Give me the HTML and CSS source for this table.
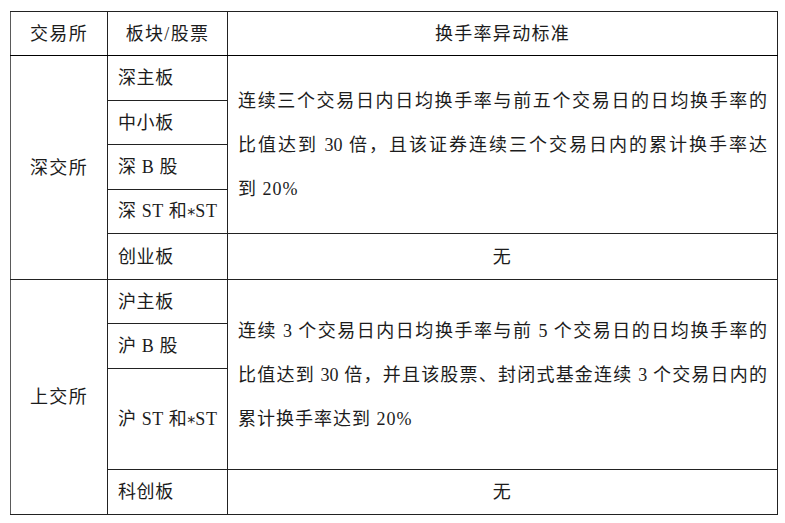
FILE: index.html
```html
<!DOCTYPE html>
<html lang="zh">
<head>
<meta charset="utf-8">
<title>换手率异动标准</title>
<link rel="stylesheet" href="styles.css">
</head>
<body>
<table class="grid">
  <colgroup>
    <col class="c1">
    <col class="c2">
    <col class="c3">
  </colgroup>
  <thead>
    <tr class="h-head">
      <th class="center">交易所</th>
      <th class="center">板块/股票</th>
      <th class="center">换手率异动标准</th>
    </tr>
  </thead>
  <tbody>
    <tr class="h45">
      <td class="center ex" rowspan="5">深交所</td>
      <td class="board">深主板</td>
      <td class="para" rowspan="4">
        <span class="jl">连续三个交易日内日均换手率与前五个交易日的日均换手率的</span>
        <span class="jl">比值达到 30 倍，且该证券连续三个交易日内的累计换手率达</span>
        <span class="ll">到 20%</span>
      </td>
    </tr>
    <tr class="h44"><td class="board">中小板</td></tr>
    <tr class="h45"><td class="board">深 B 股</td></tr>
    <tr class="h44"><td class="board">深 ST 和<span class="ast">*</span>ST</td></tr>
    <tr class="h46">
      <td class="board">创业板</td>
      <td class="center none">无</td>
    </tr>
    <tr class="h44">
      <td class="center ex" rowspan="4">上交所</td>
      <td class="board">沪主板</td>
      <td class="para" rowspan="3">
        <span class="jl">连续 3 个交易日内日均换手率与前 5 个交易日的日均换手率的</span>
        <span class="jl">比值达到 30 倍，并且该股票、封闭式基金连续 3 个交易日内的</span>
        <span class="ll">累计换手率达到 20%</span>
      </td>
    </tr>
    <tr class="h45"><td class="board">沪 B 股</td></tr>
    <tr class="h101"><td class="board">沪 ST 和<span class="ast">*</span>ST</td></tr>
    <tr class="h45">
      <td class="board">科创板</td>
      <td class="center none">无</td>
    </tr>
  </tbody>
</table>
</body>
</html>
```

FILE: styles.css
```css
html, body {
  margin: 0;
  padding: 0;
  background: #ffffff;
}

body {
  font-family: "Liberation Serif", "Noto Sans CJK SC", serif;
  font-size: 18px;
  color: #1c1c1c;
}

.grid {
  border-collapse: collapse;
  margin: 11px 0 0 10px;
  width: 767px;
  table-layout: fixed;
  border: 1px solid #5a5a5a;
}

.c1 { width: 97px; }
.c2 { width: 120px; }
.c3 { width: 550px; }

.grid th,
.grid td {
  border: 1px solid #222222;
  padding: 0 10px;
  font-weight: normal;
  vertical-align: middle;
  letter-spacing: 1.3px;
  line-height: 24px;
}

.grid td.ex,
.grid th:first-child {
  border-left-color: #5a5a5a;
}

.grid td.board {
  border-left-color: #6e6e6e;
  border-right-color: #222222;
  white-space: nowrap;
  padding-right: 0;
  letter-spacing: 0.6px;
}

.grid td.none {
  border-top-color: #777777;
}

.center {
  text-align: center;
}

.h-head { height: 44px; }
.h44 { height: 44px; }
.h45 { height: 45px; }
.h46 { height: 46px; }
.h101 { height: 101px; }

.grid thead th {
  border-bottom-color: #000000;
}

.para {
  padding: 0 10px;
}

.para .jl,
.para .ll {
  display: block;
  line-height: 44px;
  letter-spacing: 0;
}

.para .jl {
  text-align: justify;
  text-align-last: justify;
}

.para .ll {
  text-align: left;
  letter-spacing: 1px;
}

.ast {
  display: inline-block;
  font-family: "DejaVu Sans", sans-serif;
  font-size: 16px;
  transform: translateY(3px);
  letter-spacing: 0;
}
```
